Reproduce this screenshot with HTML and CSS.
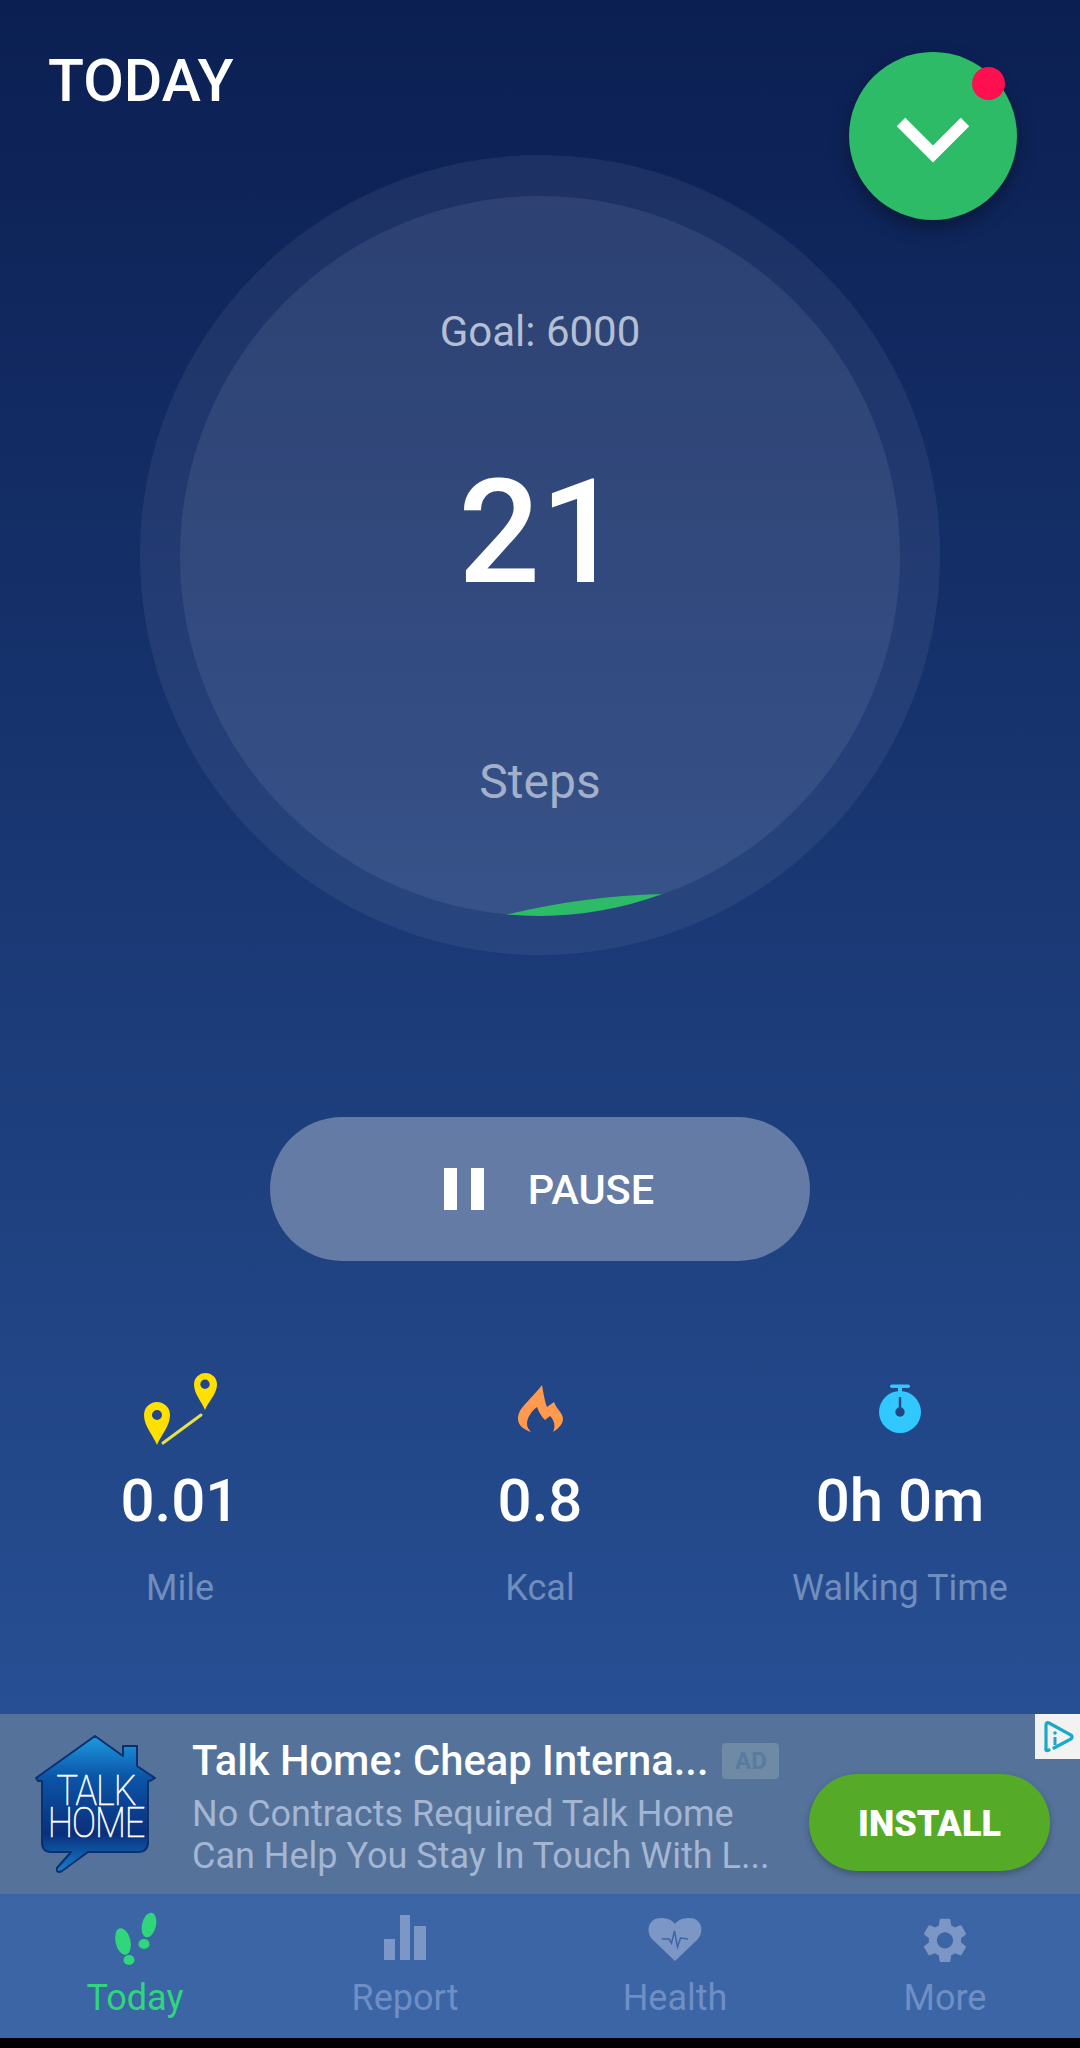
FILE: index.html
```html
<!DOCTYPE html>
<html lang="en">
<head>
    <meta charset="UTF-8">
    <meta name="viewport" content="width=device-width, initial-scale=1.0">
    <title>Today</title>
    <link rel="stylesheet" href="styles.css">
</head>
<body>
    <div class="app">
        <main class="main">
            <h1 class="title">TODAY</h1>

            <button class="fab" type="button">
                <svg width="74" height="46" viewBox="0 0 74 46"><path d="M5 5 L37 37 L69 5" fill="none" stroke="#fff" stroke-width="12"/></svg>
                <span class="fab-dot"></span>
            </button>

            <section class="ring">
                <div class="dial">
                    <div class="goal">Goal: 6000</div>
                    <div class="count">21</div>
                    <div class="unit">Steps</div>
                    <svg class="progress" width="720" height="720" viewBox="0 0 720 720"><path d="M327 718.5 A360 360 0 0 0 482 698 Q404 700 327 718.5 Z" fill="#2dbb68"/></svg>
                </div>
            </section>

            <button class="pause" type="button">
                <span class="pause-icon"><i></i><i></i></span>
                PAUSE
            </button>

            <section class="stats">
                <div class="stat">
                    <svg class="stat-icon" width="80" height="76" viewBox="0 0 80 76">
                        <path fill-rule="evenodd" fill="#ffe000" d="M17 74 C13 64 4 55 4 44 A13 13 0 0 1 30 44 C30 55 21 64 17 74 Z M17 39 A5 5 0 1 0 17 49 A5 5 0 1 0 17 39 Z"/>
                        <path fill-rule="evenodd" fill="#ffe000" d="M65 39 C62 31 54 23 54 13.500 A11.500 11.500 0 0 1 77 13.500 C77 23 68 31 65 39 Z M65 8.500 A4.700 4.700 0 1 0 65 17.900 A4.700 4.700 0 1 0 65 8.500 Z"/>
                        <path d="M23 72 L61 44" stroke="#e6df4e" stroke-width="3" stroke-linecap="round"/>
                    </svg>
                    <div class="stat-value">0.01</div>
                    <div class="stat-label">Mile</div>
                </div>
                <div class="stat">
                    <svg class="stat-icon" width="80" height="76" viewBox="-17 -13 80 76">
                        <path fill="#ff9a4f" d="M25 1 C27 12 28 18 30 23 L37 18 C40 26 46 29 46 35 C46 40 41 45 36 48 C39 42 37 36 33 32 L28 36 C24 32 21 26 20 23 C15 27 10 33 10 40 C10 43 12 46 14 48 C8 46 1 42 1 35 C1 24 10 20 25 1 Z"/>
                    </svg>
                    <div class="stat-value">0.8</div>
                    <div class="stat-label">Kcal</div>
                </div>
                <div class="stat">
                    <svg class="stat-icon" width="80" height="76" viewBox="-16 -13 80 76">
                        <rect x="14" y="0.500" width="20" height="3.500" rx="1.700" fill="#30c8ff"/>
                        <rect x="22" y="3" width="4" height="6" fill="#30c8ff"/>
                        <circle cx="24" cy="28" r="21" fill="#30c8ff"/>
                        <rect x="22.800" y="13" width="2.400" height="15" fill="#20477f"/>
                        <circle cx="24" cy="28" r="4.700" fill="#20477f"/>
                    </svg>
                    <div class="stat-value">0h 0m</div>
                    <div class="stat-label">Walking Time</div>
                </div>
            </section>
        </main>

        <section class="ad">
            <div class="ad-logo">
                <svg width="124" height="142" viewBox="0 0 124 142">
                    <defs>
                        <linearGradient id="logoFill" x1="0" y1="0" x2="0" y2="1">
                            <stop offset="0" stop-color="#1f9be0"/>
                            <stop offset="0.3" stop-color="#0a55a8"/>
                            <stop offset="0.72" stop-color="#0a2f7c"/>
                            <stop offset="1" stop-color="#1480cf"/>
                        </linearGradient>
                    </defs>
                    <path fill="url(#logoFill)" stroke="#0b2f70" stroke-width="2" stroke-linejoin="round" d="M60 2 L88 22 L88 12 L102 12 L102 32 L120 44 L115 47 L113 47 L113 108 Q113 118 103 118 L53 118 L27 137 Q21 140 22 134 L36 118 L16 118 Q7 118 7 108 L7 47 L3 47 L1 44 Z"/>
                </svg>
                <div class="logo-words">TALK<br>HOME</div>
            </div>
            <div class="ad-copy">
                <div class="ad-head">
                    <span class="ad-title">Talk Home: Cheap Interna...</span>
                    <span class="ad-badge">AD</span>
                </div>
                <p class="ad-desc">No Contracts Required Talk Home<br>Can Help You Stay In Touch With L...</p>
            </div>
            <button class="install" type="button">INSTALL</button>
            <span class="adchoice">
                <svg width="32" height="34" viewBox="0 0 32 34">
                    <path d="M4 28 Q3 32 7 30 M4 28 L4 5 Q4 1.500 7 3 L29 15 Q31 17 29 19 L12 28" fill="none" stroke="#1ba9c9" stroke-width="3.200" stroke-linecap="round"/>
                    <circle cx="13" cy="13" r="1.800" fill="#1ba9c9"/>
                    <rect x="11.500" y="17" width="3" height="8" fill="#1ba9c9"/>
                </svg>
            </span>
        </section>

        <nav class="nav">
            <div class="nav-item active">
                <svg class="nav-icon" width="60" height="56" viewBox="0 0 60 56" fill="#2fd67c">
                    <ellipse cx="18" cy="29.500" rx="7.500" ry="13.500" transform="rotate(-13 18 29.500)"/>
                    <ellipse cx="24" cy="48" rx="5.500" ry="5"/>
                    <ellipse cx="44" cy="13" rx="7" ry="12.500" transform="rotate(13 44 13)"/>
                    <ellipse cx="39" cy="32" rx="5.500" ry="5"/>
                </svg>
                <span>Today</span>
            </div>
            <div class="nav-item">
                <svg class="nav-icon" width="60" height="56" viewBox="0 0 60 56" fill="#7c97c6">
                    <rect x="9" y="27" width="11" height="21"/>
                    <rect x="25" y="3" width="10" height="45"/>
                    <rect x="39" y="14" width="12" height="34"/>
                </svg>
                <span>Report</span>
            </div>
            <div class="nav-item">
                <svg class="nav-icon" width="60" height="56" viewBox="0 0 60 56">
                    <path fill="#7c97c6" d="M30 49 L8 28 C0 20 3 6 16 6 C22 6 27 8 30 12 C33 8 38 6 44 6 C57 6 60 20 52 28 Z"/>
                    <path fill="none" stroke="#3b65a5" stroke-width="1.500" d="M17 27 L24 27 L26.500 31 L29.500 19 L32.500 35 L35.500 26 L43 27"/>
                </svg>
                <span>Health</span>
            </div>
            <div class="nav-item">
                <svg class="nav-icon" width="60" height="56" viewBox="-1.330 -0.600 26.670 24.890" fill="#7c97c6">
                    <path d="M19.140 12.940c.04-.3.06-.61.06-.94 0-.32-.02-.64-.07-.94l2.030-1.580c.18-.14.23-.41.12-.61l-1.920-3.320c-.12-.22-.37-.29-.59-.22l-2.390.96c-.5-.38-1.030-.7-1.620-.94l-.36-2.540c-.04-.24-.24-.41-.48-.41h-3.840c-.24 0-.43.17-.47.41l-.36 2.540c-.59.24-1.130.57-1.620.94l-2.390-.96c-.22-.08-.47 0-.59.22L2.740 8.870c-.12.21-.08.47.12.61l2.030 1.580c-.05.3-.09.63-.09.94s.02.64.07.94l-2.030 1.580c-.18.14-.23.41-.12.61l1.920 3.320c.12.22.37.29.59.22l2.390-.96c.5.38 1.030.7 1.620.94l.36 2.540c.05.24.24.41.48.41h3.840c.24 0 .44-.17.47-.41l.36-2.540c.59-.24 1.130-.56 1.620-.94l2.390.96c.22.08.47 0 .59-.22l1.920-3.320c.12-.22.07-.47-.12-.61l-2.010-1.580zM12 15.600c-1.980 0-3.600-1.620-3.600-3.600s1.620-3.600 3.600-3.600 3.600 1.620 3.600 3.600-1.620 3.600-3.600 3.600z"/>
                </svg>
                <span>More</span>
            </div>
        </nav>

        <div class="bottom-bar"></div>
    </div>
</body>
</html>
```

FILE: styles.css
```css
* {
    box-sizing: border-box;
}
body {
    margin: 0;
    font-family: 'Roboto', sans-serif;
    background-color: #000;
}
button {
    font-family: inherit;
    border: none;
    padding: 0;
}
.app {
    width: 1080px;
    height: 2048px;
    display: flex;
    flex-direction: column;
    overflow: hidden;
}
.main {
    position: relative;
    flex: 1;
    display: flex;
    flex-direction: column;
    align-items: center;
    background: linear-gradient(180deg, #0b1f52 0%, #274f93 100%);
}
.title {
    align-self: flex-start;
    margin: 48px 0 0 48px;
    height: 107px;
    font-size: 59px;
    line-height: 66px;
    font-weight: 500;
    color: #fff;
}
.fab {
    position: absolute;
    left: 849px;
    top: 52px;
    width: 168px;
    height: 168px;
    border-radius: 50%;
    background: #2dbb68;
    box-shadow: 0 8px 18px rgba(0, 0, 0, 0.35);
    display: flex;
    align-items: center;
    justify-content: center;
}
.fab svg {
    margin-top: 8px;
}
.fab-dot {
    position: absolute;
    left: 123px;
    top: 15px;
    width: 33px;
    height: 33px;
    border-radius: 50%;
    background: #ff0f4f;
}
.ring {
    width: 800px;
    height: 800px;
    border-radius: 50%;
    background: rgba(220, 230, 255, 0.07);
    padding: 41px 40px 39px;
}
.dial {
    position: relative;
    width: 720px;
    height: 720px;
    border-radius: 50%;
    background: rgba(220, 230, 255, 0.085);
    display: flex;
    flex-direction: column;
    align-items: center;
    padding-top: 112px;
}
.goal {
    font-size: 42px;
    line-height: 48px;
    color: #b4bfd4;
}
.count {
    margin-top: 92px;
    font-size: 144px;
    line-height: 170px;
    font-weight: 500;
    color: #fff;
}
.unit {
    margin-top: 136px;
    font-size: 48px;
    line-height: 56px;
    color: #a3b0c9;
}
.progress {
    position: absolute;
    left: 0;
    top: 0;
}
.pause {
    margin-top: 162px;
    width: 540px;
    height: 144px;
    padding-left: 18px;
    border-radius: 72px;
    background: #647ba6;
    color: #fff;
    font-size: 41.5px;
    font-weight: 500;
    display: flex;
    align-items: center;
    justify-content: center;
    gap: 44px;
}
.pause-icon {
    display: flex;
    gap: 14px;
}
.pause-icon i {
    display: block;
    width: 13px;
    height: 42px;
    background: #fff;
}
.stats {
    margin-top: 110px;
    width: 100%;
    display: grid;
    grid-template-columns: repeat(3, 1fr);
}
.stat {
    display: flex;
    flex-direction: column;
    align-items: center;
}
.stat-icon {
    display: block;
}
.stat-value {
    margin-top: 19px;
    font-size: 60px;
    line-height: 70px;
    font-weight: 500;
    color: #fff;
}
.stat-label {
    margin-top: 31px;
    font-size: 36px;
    line-height: 42px;
    color: #6f8dbd;
}
.ad {
    position: relative;
    height: 180px;
    background: #54729a;
    display: flex;
    align-items: flex-start;
    padding: 20px 30px 0 35px;
}
.ad-logo {
    position: relative;
    flex: none;
    width: 124px;
    height: 142px;
}
.ad-logo svg {
    display: block;
}
.logo-words {
    position: absolute;
    left: 0;
    top: 42px;
    width: 122px;
    font-size: 36px;
    font-weight: 100;
    line-height: 26.5px;
    letter-spacing: -1px;
    text-align: center;
    color: #fff;
    -webkit-text-stroke: 0.6px #fff;
    transform: scaleY(1.17);
    transform-origin: top;
}
.ad-copy {
    margin-left: 33px;
    padding-top: 3px;
    width: 600px;
}
.ad-head {
    display: flex;
    align-items: center;
    gap: 14px;
}
.ad-title {
    font-size: 41.7px;
    line-height: 48px;
    font-weight: 500;
    color: #fff;
}
.ad-badge {
    width: 57px;
    height: 36px;
    border-radius: 4px;
    background: #6e8aa5;
    color: #5a7aa0;
    font-size: 24px;
    font-weight: 700;
    line-height: 36px;
    text-align: center;
}
.ad-desc {
    margin: 8px 0 0;
    font-size: 36px;
    line-height: 42px;
    color: #a5b6d3;
}
.install {
    position: absolute;
    left: 809px;
    top: 60px;
    width: 241px;
    height: 97px;
    padding-top: 2px;
    border-radius: 49px;
    background: #55ab27;
    color: #fff;
    font-size: 36px;
    font-weight: 900;
    box-shadow: 0 3px 6px rgba(0, 0, 0, 0.25);
}
.adchoice {
    position: absolute;
    right: 0;
    top: 0;
    width: 45px;
    height: 45px;
    background: #f2f2f2;
    display: flex;
    align-items: center;
    justify-content: center;
}
.nav {
    height: 144px;
    background: #3b65a5;
    display: grid;
    grid-template-columns: repeat(4, 1fr);
}
.nav-item {
    display: flex;
    flex-direction: column;
    align-items: center;
    padding-top: 18px;
    font-size: 36px;
    line-height: 42px;
    color: #6f8fc4;
}
.nav-item.active {
    color: #2fd67c;
}
.nav-icon {
    display: block;
    margin-bottom: 9px;
}
.bottom-bar {
    height: 10px;
    background: #000;
}
```
